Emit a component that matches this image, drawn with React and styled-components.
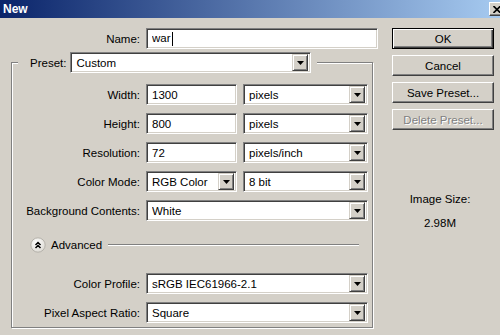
import React from "react";
import styled, { createGlobalStyle } from "styled-components";

const GlobalStyle = createGlobalStyle`
  * { box-sizing: border-box; }
  body {
    margin: 0;
    background: #d4d0c8;
    font-family: "Liberation Sans", Arial, sans-serif;
    font-size: 11.5px;
    color: #000;
  }
`;

const Window = styled.div`
  width: 500px;
  height: 335px;
  overflow: hidden;
  background: #d4d0c8;
`;

const TitleBar = styled.div`
  height: 18px;
  display: flex;
  align-items: center;
  justify-content: space-between;
  padding-left: 3px;
  background: linear-gradient(to right, #0a246a, #a6caf0);
`;

const Title = styled.span`
  color: #fff;
  font-weight: bold;
  font-size: 12px;
`;

const CloseBox = styled.div`
  width: 16px;
  height: 14px;
  margin-right: -5px;
  display: flex;
  align-items: center;
  justify-content: center;
  background: #d4d0c8;
  border: 1px solid;
  border-color: #fff #404040 #404040 #fff;
  box-shadow: inset -1px -1px #808080;
`;

const Body = styled.div`
  display: flex;
  padding-top: 10px;
`;

const LeftCol = styled.div`
  width: 381px;
  padding-left: 11px;
  display: flex;
  flex-direction: column;
`;

const RightCol = styled.div`
  width: 102px;
  margin-left: 11px;
  display: flex;
  flex-direction: column;
  gap: 6px;
`;

const Row = styled.div`
  display: flex;
  align-items: center;
  gap: 6px;
`;

const Label = styled.span`
  width: ${(p) => p.$w || 128}px;
  text-align: right;
  white-space: nowrap;
`;

const Sunken = styled.div`
  width: ${(p) => p.$w}px;
  height: 21px;
  display: flex;
  align-items: center;
  background: #fff;
  border: 1px solid;
  border-color: #808080 #fff #fff #808080;
  box-shadow: inset 1px 1px #404040, inset -1px -1px #d4d0c8;
  padding: 2px 2px 2px 5px;
  white-space: nowrap;
`;

const Value = styled.span`
  flex: 1;
  overflow: hidden;
`;

const Caret = styled.span`
  display: inline-block;
  width: 1px;
  height: 14px;
  background: #000;
  vertical-align: middle;
  margin-left: 1px;
`;

const ArrowBtn = styled.div`
  width: 16px;
  height: 17px;
  display: flex;
  align-items: center;
  justify-content: center;
  background: #d4d0c8;
  border: 1px solid;
  border-color: #d4d0c8 #404040 #404040 #d4d0c8;
  box-shadow: inset 1px 1px #fff, inset -1px -1px #808080;
`;

const Group = styled.fieldset`
  width: 362px;
  margin: 3px 0 0 0;
  min-width: 0;
  padding: 11px 4px 4px 0;
  border: 1px solid #808080;
  box-shadow: 1px 1px 0 #fff, inset 1px 1px 0 #fff;
  display: flex;
  flex-direction: column;
  gap: 8px;
`;

const Legend = styled.legend`
  margin-left: 6px;
  padding: 0 6px 0 12px;
  background: #d4d0c8;
  display: flex;
  align-items: center;
  gap: 4px;
`;

const AdvancedRow = styled.div`
  height: 16px;
  display: flex;
  align-items: center;
  padding-left: 18px;
  margin: 8px 0 12px;
`;

const AdvancedText = styled.span`
  margin-left: 5px;
`;

const Etched = styled.div`
  flex: 1;
  height: 2px;
  margin: 0 9px 0 6px;
  border-top: 1px solid #808080;
  border-bottom: 1px solid #fff;
`;

const Button = styled.div`
  height: 21px;
  display: flex;
  align-items: center;
  justify-content: center;
  background: #d4d0c8;
  border: 1px solid;
  border-color: ${(p) => (p.$default ? "#000" : "#fff #404040 #404040 #fff")};
  box-shadow: ${(p) =>
    p.$default
      ? "inset 1px 1px #fff, inset -1px -1px #404040, inset -2px -2px #808080"
      : "inset -1px -1px #808080"};
  color: ${(p) => (p.$disabled ? "#808080" : "#000")};
  text-shadow: ${(p) => (p.$disabled ? "1px 1px 0 #fff" : "none")};
`;

const SizeInfo = styled.div`
  margin-top: 55px;
  padding-right: 6px;
  text-align: center;
  line-height: 16px;
`;

const SizeValue = styled.div`
  margin-top: 8px;
`;

const DownArrow = () => (
  <svg width="7" height="4" viewBox="0 0 7 4">
    <path d="M0 0 L7 0 L3.5 4 Z" fill="#000" />
  </svg>
);

const Combo = ({ w, value }) => (
  <Sunken $w={w}>
    <Value>{value}</Value>
    <ArrowBtn>
      <DownArrow />
    </ArrowBtn>
  </Sunken>
);

const AdvancedIcon = () => (
  <svg width="16" height="16" viewBox="0 0 16 16">
    <defs>
      <radialGradient id="adv" cx="0.4" cy="0.35" r="0.7">
        <stop offset="0" stopColor="#ffffff" />
        <stop offset="1" stopColor="#dcd9d2" />
      </radialGradient>
    </defs>
    <circle cx="8" cy="8" r="7.2" fill="url(#adv)" stroke="#b5b2ab" />
    <path d="M5.5 8 L8 5.5 L10.5 8 M5.5 11 L8 8.5 L10.5 11" fill="none" stroke="#000" strokeWidth="1.5" />
  </svg>
);

export default function App() {
  return (
    <Window>
      <GlobalStyle />
      <TitleBar>
        <Title>New</Title>
        <CloseBox>
          <svg width="8" height="7" viewBox="0 0 8 7">
            <path d="M0.5 0 L7.5 7 M7.5 0 L0.5 7" stroke="#000" strokeWidth="1.6" />
          </svg>
        </CloseBox>
      </TitleBar>
      <Body>
        <LeftCol>
          <Row>
            <Label $w={129}>Name:</Label>
            <Sunken $w={232}>
              <Value>
                war<Caret />
              </Value>
            </Sunken>
          </Row>
          <Group>
            <Legend>
              <span>Preset:</span>
              <Combo w={241} value="Custom" />
            </Legend>
            <Row>
              <Label>Width:</Label>
              <Sunken $w={91}>1300</Sunken>
              <Combo w={125} value="pixels" />
            </Row>
            <Row>
              <Label>Height:</Label>
              <Sunken $w={91}>800</Sunken>
              <Combo w={125} value="pixels" />
            </Row>
            <Row>
              <Label>Resolution:</Label>
              <Sunken $w={91}>72</Sunken>
              <Combo w={125} value="pixels/inch" />
            </Row>
            <Row>
              <Label>Color Mode:</Label>
              <Combo w={91} value="RGB Color" />
              <Combo w={125} value="8 bit" />
            </Row>
            <Row>
              <Label>Background Contents:</Label>
              <Combo w={222} value="White" />
            </Row>
            <AdvancedRow>
              <AdvancedIcon />
              <AdvancedText>Advanced</AdvancedText>
              <Etched />
            </AdvancedRow>
            <Row>
              <Label>Color Profile:</Label>
              <Combo w={222} value="sRGB IEC61966-2.1" />
            </Row>
            <Row>
              <Label>Pixel Aspect Ratio:</Label>
              <Combo w={222} value="Square" />
            </Row>
          </Group>
        </LeftCol>
        <RightCol>
          <Button $default>OK</Button>
          <Button>Cancel</Button>
          <Button>Save Preset...</Button>
          <Button $disabled>Delete Preset...</Button>
          <SizeInfo>
            <div>Image Size:</div>
            <SizeValue>2.98M</SizeValue>
          </SizeInfo>
        </RightCol>
      </Body>
    </Window>
  );
}
